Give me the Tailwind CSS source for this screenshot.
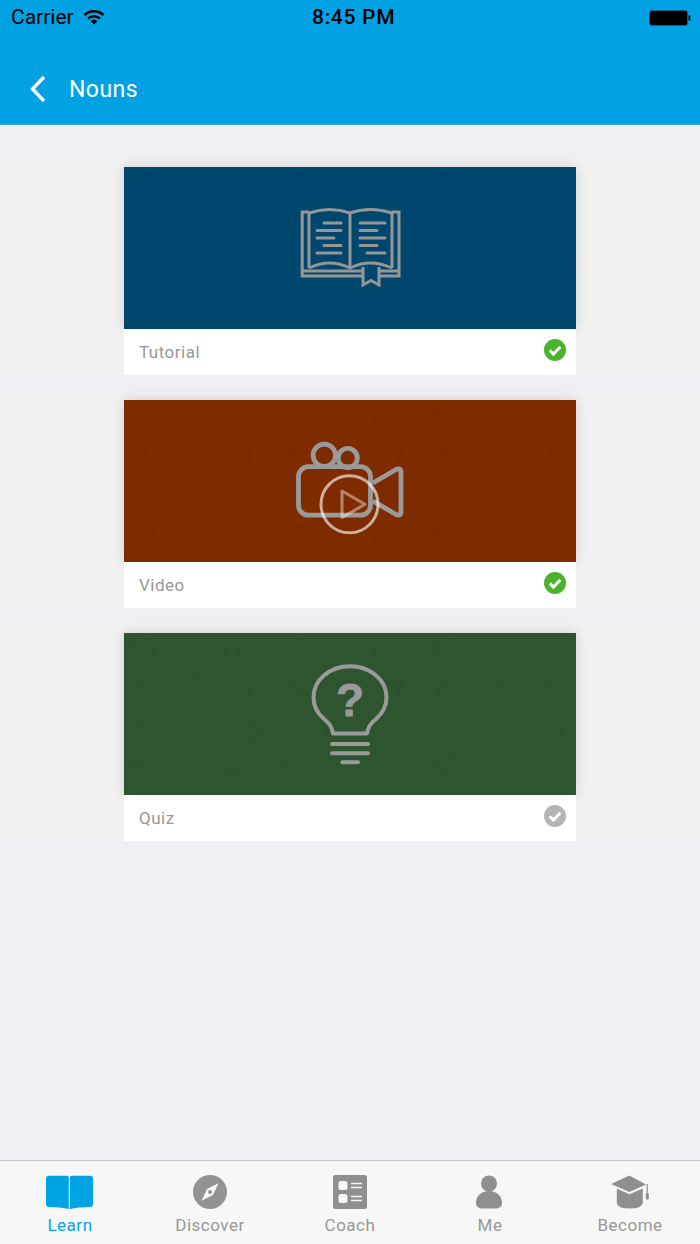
<!DOCTYPE html>
<html lang="en">
<head>
    <meta charset="UTF-8">
    <meta name="viewport" content="width=device-width, initial-scale=1.0">
    <title>Nouns</title>
    <script src="https://cdn.jsdelivr.net/npm/@tailwindcss/browser@4"></script>
</head>
<body class="bg-[#efeff4] font-['Roboto',sans-serif]">
    <div class="w-[700px] h-[1244px] flex flex-col overflow-hidden">

        <!-- Header -->
        <header class="h-[125px] shrink-0 bg-[#00a2e3] border-b border-[#3fa9dc] flex flex-col">
            <div class="h-[36px] px-[11px] flex items-center justify-between relative text-black text-[21px]">
                <div class="flex items-center gap-[9px]">
                    <span>Carrier</span>
                    <svg class="w-[22px] h-[16px] -mt-[3px]" viewBox="0 0 22 16">
                        <path d="M1.5 6 A14 14 0 0 1 20.5 6" fill="none" stroke="#000" stroke-width="2.4"/>
                        <path d="M5 9.5 A9 9 0 0 1 17 9.5" fill="none" stroke="#000" stroke-width="2.4"/>
                        <path d="M7.6 12.2 A5 5 0 0 1 14.4 12.2 L11 15.6 Z" fill="#000"/>
                    </svg>
                </div>
                <span class="absolute left-[312px] font-medium tracking-[0.7px]">8:45 PM</span>
                <svg class="w-[42px] h-[16px] -mr-[2px]" viewBox="0 0 42 16">
                    <rect x="0.5" y="0.5" width="38" height="15" rx="2.5" fill="#000" stroke="#0a5f8a"/>
                    <rect x="39.5" y="5.5" width="1.8" height="5" fill="#000"/>
                </svg>
            </div>
            <div class="flex-1 flex items-center pl-[29px] pt-[18px]">
                <svg class="w-[18px] h-[28px] -mt-[1px]" viewBox="0 0 18 28">
                    <path d="M15 2 L3.5 14 L15 26" fill="none" stroke="#fff" stroke-width="3.4"/>
                </svg>
                <span class="ml-[22px] text-white text-[23px] tracking-[0.45px] pt-[2px]">Nouns</span>
            </div>
        </header>

        <!-- Doodle pattern shared by the card images -->
        <svg class="absolute w-0 h-0">
            <defs>
                <pattern id="doodles" width="150" height="118" patternUnits="userSpaceOnUse">
                    <g fill="none" stroke="#000" stroke-opacity="0.05" stroke-width="1.5">
                        <path d="M8 14 L26 6 L30 20 Z"/>
                        <path d="M48 10 L70 26"/>
                        <circle cx="108" cy="18" r="7"/>
                        <path d="M14 52 L34 62 M14 62 L24 46"/>
                        <rect x="62" y="48" width="16" height="10" transform="rotate(-24 70 53)"/>
                        <path d="M108 52 L128 46 L124 64"/>
                        <path d="M6 98 L28 90"/>
                        <circle cx="58" cy="98" r="5"/>
                        <path d="M86 90 L106 106 M122 88 L138 100 L122 110"/>
                    </g>
                </pattern>
            </defs>
        </svg>

        <!-- Lesson list -->
        <main class="flex-1 pt-[34px] flex flex-col gap-[17px]">

            <section class="h-[216px] bg-[#f1f1f2] pt-[8px] flex justify-center">
                <div class="w-[452px] h-[208px] bg-white">
                    <div class="h-[162px] bg-[#00476f] relative flex items-center justify-center shadow-[0_0_12px_rgba(0,0,0,0.14)]">
                        <svg class="absolute inset-0 w-full h-full"><rect width="100%" height="100%" fill="url(#doodles)"/></svg>
                        <svg class="relative w-[102px] h-[82px]" viewBox="299 207 102 82" fill="none" stroke="#969696" stroke-width="3">
                            <path d="M309 212 H302.2 V276 H363 M379 276 H399 V212 H392"/>
                            <path d="M309 212 V268 M392 212 V268"/>
                            <path d="M309 213 Q330 206 350 213 Q370 206 392 213"/>
                            <path d="M350 213 V268"/>
                            <path d="M309 268 Q330 258 350 268 Q370 258 392 268"/>
                            <path d="M303 271 H363 M379 271 H398"/>
                            <path d="M363 267 V285 L371 280.5 L379 285 V267"/>
                            <path stroke-linecap="round" d="M324 223 H341 M317 230.5 H341 M317 238 H334 M324 245.5 H341 M317 253 H341 M360 223 H385 M360 230.5 H377 M360 238 H385 M360 245.5 H377 M367 253 H385"/>
                        </svg>
                    </div>
                    <div class="relative bg-white h-[46px] pl-[15px] pr-[10px] flex items-center justify-between">
                        <span class="text-[#979797] text-[17px] tracking-[0.5px] pt-[1px]">Tutorial</span>
                        <svg class="w-[22px] h-[22px] -mt-[4px]" viewBox="0 0 22 22">
                            <circle cx="11" cy="11" r="11" fill="#4bb22b"/>
                            <path d="M5.8 11.4 L9.4 15 L16.4 7.8" fill="none" stroke="#fff" stroke-width="3"/>
                        </svg>
                    </div>
                </div>
            </section>

            <section class="h-[216px] bg-[#f1f1f2] pt-[8px] flex justify-center">
                <div class="w-[452px] h-[208px] bg-white">
                    <div class="h-[162px] bg-[#7f2b00] relative flex items-center justify-center shadow-[0_0_12px_rgba(0,0,0,0.14)]">
                        <svg class="absolute inset-0 w-full h-full"><rect width="100%" height="100%" fill="url(#doodles)"/></svg>
                        <svg class="relative w-[120px] h-[110px]" viewBox="290 426 120 110" fill="none">
                            <g stroke="#9a9a9a" stroke-width="4.8" stroke-linejoin="round">
                                <rect x="298.5" y="466.7" width="72" height="48.5" rx="10"/>
                                <circle cx="324.3" cy="455.3" r="11.2"/>
                                <circle cx="347.7" cy="458" r="9.6"/>
                                <path d="M373 483 L396 469.5 Q401 467.5 401 472 V512 Q401 516.5 396 514.5 L373 501"/>
                            </g>
                            <circle cx="349.5" cy="504.3" r="28.5" stroke="#fff" stroke-opacity="0.62" stroke-width="3"/>
                            <path d="M342 491 V517.5 L365 504.3 Z" stroke="#fff" stroke-opacity="0.42" stroke-width="3" stroke-linejoin="round"/>
                        </svg>
                    </div>
                    <div class="relative bg-white h-[46px] pl-[15px] pr-[10px] flex items-center justify-between">
                        <span class="text-[#979797] text-[17px] tracking-[0.5px] pt-[1px]">Video</span>
                        <svg class="w-[22px] h-[22px] -mt-[4px]" viewBox="0 0 22 22">
                            <circle cx="11" cy="11" r="11" fill="#4bb22b"/>
                            <path d="M5.8 11.4 L9.4 15 L16.4 7.8" fill="none" stroke="#fff" stroke-width="3"/>
                        </svg>
                    </div>
                </div>
            </section>

            <section class="h-[216px] bg-[#f1f1f2] pt-[8px] flex justify-center">
                <div class="w-[452px] h-[208px] bg-white">
                    <div class="h-[162px] bg-[#2f5530] relative flex items-center justify-center shadow-[0_0_12px_rgba(0,0,0,0.14)]">
                        <svg class="absolute inset-0 w-full h-full"><rect width="100%" height="100%" fill="url(#doodles)"/></svg>
                        <svg class="relative w-[90px] h-[110px]" viewBox="305 659 90 110" fill="none" stroke="#9a9a9a" stroke-width="4">
                            <path d="M333 733.5 H367 Q368 725 376 719 Q386.5 710 386.5 697 A36.2 30.5 0 0 0 313.5 697 Q313.5 710 324 719 Q332 725 333 733.5 Z" stroke-linejoin="round"/>
                            <path stroke-linecap="round" d="M332 744 H368 M332 753.3 H368 M342.5 762.3 H358"/>
                            <text x="350" y="716" text-anchor="middle" fill="#9a9a9a" stroke="#9a9a9a" stroke-width="0.8" font-family="Liberation Sans" font-weight="700" font-size="46">?</text>
                        </svg>
                    </div>
                    <div class="relative bg-white h-[46px] pl-[15px] pr-[10px] flex items-center justify-between">
                        <span class="text-[#979797] text-[17px] tracking-[0.5px] pt-[1px]">Quiz</span>
                        <svg class="w-[22px] h-[22px] -mt-[4px]" viewBox="0 0 22 22">
                            <circle cx="11" cy="11" r="11" fill="#b5b5b5"/>
                            <path d="M5.8 11.4 L9.4 15 L16.4 7.8" fill="none" stroke="#fff" stroke-width="3"/>
                        </svg>
                    </div>
                </div>
            </section>
        </main>

        <!-- Tab bar -->
        <nav class="h-[84px] shrink-0 bg-[#f7f7f7] border-t border-[#c4c4c6] grid grid-cols-5 text-[17px] tracking-[0.5px] text-[#979797]">
            <div class="flex flex-col items-center pt-[14px]">
                <svg class="w-[48px] h-[34px]" viewBox="46 1175 48 34" fill="#00a3e3">
                    <path d="M49 1175.7 H67 Q68.8 1175.7 68.8 1177.5 V1209 Q61 1207 49 1207 Q46 1207 46 1204 V1179 Q46 1175.7 49 1175.7 Z"/>
                    <path d="M90 1175.7 H72 Q69.8 1175.7 69.8 1177.5 V1209 Q78 1207 90 1207 Q93 1207 93 1204 V1179 Q93 1175.7 90 1175.7 Z"/>
                </svg>
                <span class="mt-[6px] text-[#00a3e3] leading-[20px]">Learn</span>
            </div>
            <div class="flex flex-col items-center pt-[14px]">
                <svg class="w-[36px] h-[34px]" viewBox="192 1176 36 34">
                    <circle cx="210" cy="1193" r="17" fill="#939393"/>
                    <path d="M201.5 1201.8 L207 1190 L218.5 1184.3 L213 1196 Z" fill="#f7f7f7"/>
                    <circle cx="210" cy="1193" r="2" fill="#939393"/>
                </svg>
                <span class="mt-[6px] leading-[20px]">Discover</span>
            </div>
            <div class="flex flex-col items-center pt-[14px]">
                <svg class="w-[34px] h-[34px] -ml-[1px]" viewBox="0 0 34 34">
                    <rect width="34" height="34" rx="2.5" fill="#8f8f8f"/>
                    <rect x="5.5" y="6" width="9" height="9" rx="2.5" fill="#f7f7f7"/>
                    <rect x="5.5" y="19" width="9" height="9" rx="2.5" fill="#f7f7f7"/>
                    <path d="M18 8.5 H29 M18 12.5 H29 M18 21.5 H29 M18 25.5 H29" stroke="#f7f7f7" stroke-width="1.6"/>
                </svg>
                <span class="mt-[6px] leading-[20px]">Coach</span>
            </div>
            <div class="flex flex-col items-center pt-[14px]">
                <svg class="w-[28px] h-[34px] -ml-[2px]" viewBox="0 0 28 34" fill="#8f8f8f">
                    <circle cx="14" cy="8.5" r="8"/>
                    <path d="M14 16 C6 16 1 21 1 28 C1 32 4 33.5 8 33.5 H20 C24 33.5 27 32 27 28 C27 21 22 16 14 16 Z"/>
                </svg>
                <span class="mt-[6px] leading-[20px]">Me</span>
            </div>
            <div class="flex flex-col items-center pt-[14px]">
                <svg class="w-[40px] h-[34px]" viewBox="610 1175 40 34" fill="#8f8f8f">
                    <path d="M629.3 1175.5 L611 1184 L629.3 1192 L646 1184.5 Z"/>
                    <path d="M616.8 1188.5 L629.3 1194.2 L642.8 1188.5 V1203 Q642 1208.5 629.5 1208.5 Q617.5 1208.5 616.8 1203 Z"/>
                    <path d="M647.2 1184 V1193" stroke="#8f8f8f" stroke-width="1.2"/>
                    <rect x="645.8" y="1193" width="3" height="6.5" rx="1"/>
                </svg>
                <span class="mt-[6px] leading-[20px]">Become</span>
            </div>
        </nav>
    </div>
</body>
</html>
